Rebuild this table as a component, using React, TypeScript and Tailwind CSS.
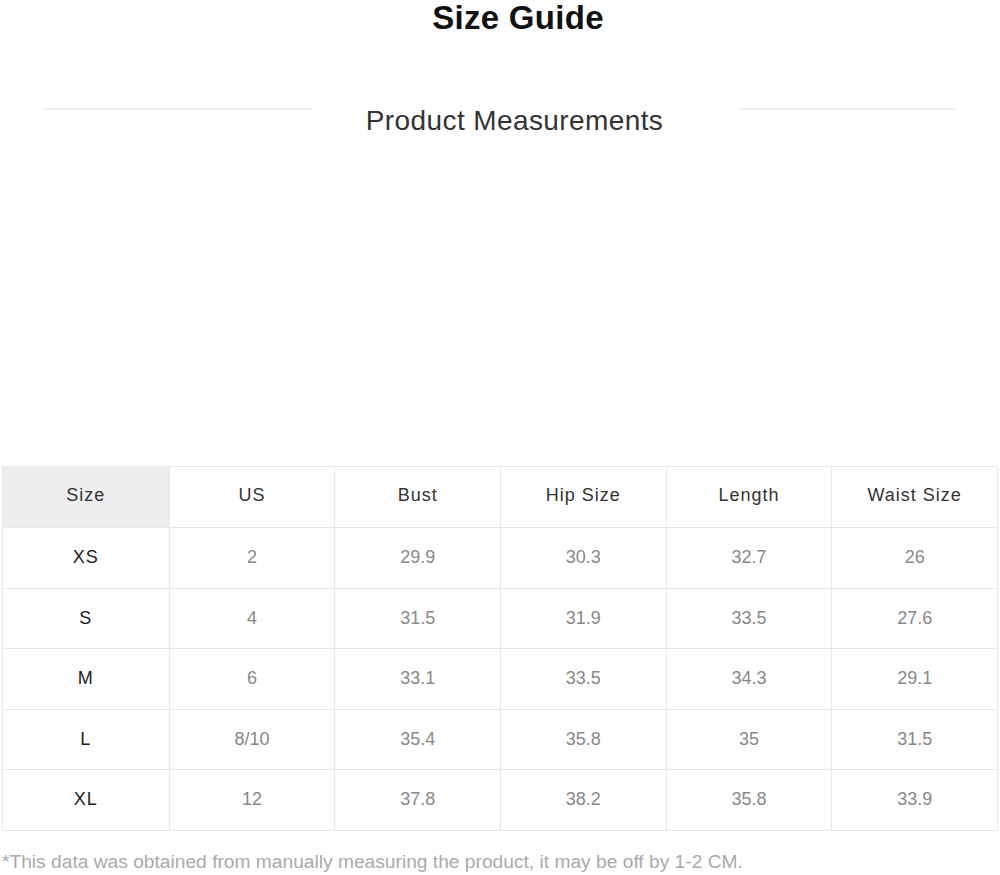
import React from "react";

const headers = ["Size", "US", "Bust", "Hip Size", "Length", "Waist Size"];
const rows = [
  ["XS", "2", "29.9", "30.3", "32.7", "26"],
  ["S", "4", "31.5", "31.9", "33.5", "27.6"],
  ["M", "6", "33.1", "33.5", "34.3", "29.1"],
  ["L", "8/10", "35.4", "35.8", "35", "31.5"],
  ["XL", "12", "37.8", "38.2", "35.8", "33.9"],
];

export default function App() {
  return (
    <div className="w-[1000px] h-[875px] bg-white font-['Liberation_Sans',Arial,sans-serif] overflow-hidden">
      <h1 className="text-center text-[33px] leading-[36px] font-bold text-[#111] pl-[36px] tracking-[0.3px]">Size Guide</h1>
      <div className="mt-[58px] flex items-center h-[30px]">
        <div className="ml-[43px] w-[270px] h-[2px] bg-[#f0f0f0]" />
        <div className="flex-1 text-center text-[28px] leading-[32px] text-[#333] pr-[24px] mt-[23px] tracking-[0.4px]">Product Measurements</div>
        <div className="mr-[45px] w-[215px] h-[2px] bg-[#f0f0f0]" />
      </div>
      <div className="mt-[342px] ml-[2px] w-[996px] border border-[#e8e8e8]">
        <div className="grid grid-cols-6 h-[60px]">
          {headers.map((h, i) => (
            <div
              key={h}
              className={`flex items-center justify-center pb-[3px] text-[18px] text-[#333] tracking-[1px] border-[#e8e8e8] ${i > 0 ? "border-l" : ""} ${i === 0 ? "bg-[#eeeeee]" : ""}`}
            >
              {h}
            </div>
          ))}
        </div>
        {rows.map((r) => (
          <div key={r[0]} className="grid grid-cols-6 h-[60.5px] border-t border-[#e8e8e8]">
            {r.map((c, i) => (
              <div
                key={i}
                className={`flex items-center justify-center text-[18px] border-[#e8e8e8] ${i > 0 ? "border-l text-[#888]" : "text-[#222] tracking-[1px]"}`}
              >
                {c}
              </div>
            ))}
          </div>
        ))}
      </div>
      <p className="mt-[20px] ml-[2px] text-[19.2px] leading-[22px] text-[#aaa]">
        *This data was obtained from manually measuring the product, it may be off by 1-2 CM.
      </p>
    </div>
  );
}
